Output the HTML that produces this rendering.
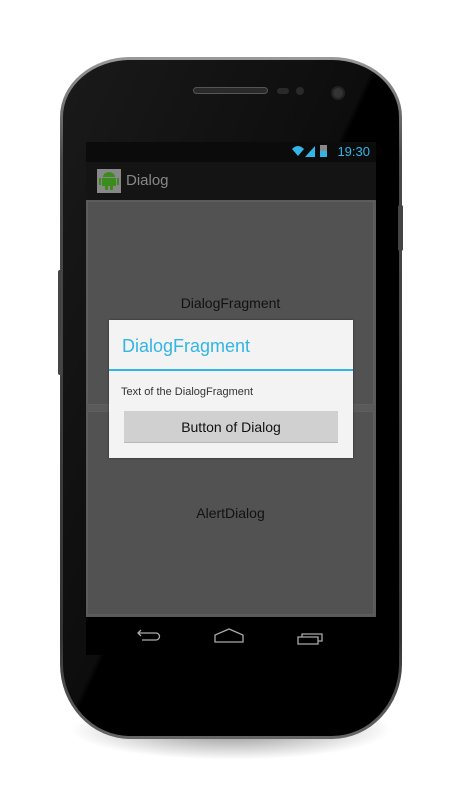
<!DOCTYPE html>
<html><head><meta charset="utf-8"><style>
*{margin:0;padding:0;box-sizing:border-box}
body{width:460px;height:800px;background:#fff;position:relative;overflow:hidden;font-family:"Liberation Sans",sans-serif}
.shadow{position:absolute;left:70px;top:700px;width:322px;height:60px;border-radius:50%;background:radial-gradient(ellipse,rgba(0,0,0,.45),rgba(0,0,0,0) 70%)}
.rim{position:absolute;left:60px;top:57px;width:342px;height:682px;border-radius:70px 70px 70px 70px/60px 60px 75px 75px;background:linear-gradient(#9a9a9a,#4a4a4a 15%,#333 85%,#666)}
.body{position:absolute;left:63px;top:60px;width:336px;height:676px;border-radius:67px 67px 67px 67px/57px 57px 72px 72px;background:#000;overflow:hidden}
.gloss{position:absolute;left:0;top:0;width:336px;height:676px;background:linear-gradient(115deg,rgba(255,255,255,.10),rgba(255,255,255,.05) 48%,rgba(0,0,0,0) 49%)}
.sb{position:absolute;background:#444;border-radius:2px}
.screen{position:absolute;left:86px;top:142px;width:290px;height:513px;background:#000;overflow:hidden}
.status{height:20px;background:#0b0b0b;color:#33b5e5;font-size:13px;text-align:right;padding-right:6px;line-height:20px}
.abar{height:38px;background:#141414;position:relative}
.content{position:absolute;left:0;top:58px;width:290px;height:417px;background:#5a5a5a}
.btn{position:absolute;left:1px;width:287px;background:#525252;color:#111;font-size:14px;text-align:center;border:1px solid #5e5e5e}
.nav{position:absolute;left:0;top:475px;width:290px;height:38px;background:#000}
.dlg{position:absolute;left:109px;top:320px;width:244px;height:138px;background:#f3f3f3;box-shadow:0 0 2px rgba(0,0,0,.5)}
</style></head><body>
<div class="shadow"></div>
<div class="rim"></div>
<div class="body"><div class="gloss"></div></div>
<div class="sb" style="left:398px;top:205px;width:5px;height:46px"></div>
<div class="sb" style="left:58px;top:270px;width:5px;height:105px"></div>
<div style="position:absolute;left:193px;top:87px;width:75px;height:7px;border-radius:4px;background:#2a2a2a;border:1px solid #555"></div>
<div style="position:absolute;left:277px;top:88px;width:12px;height:6px;border-radius:3px;background:#2a2a2a"></div>
<div style="position:absolute;left:296px;top:87px;width:8px;height:8px;border-radius:50%;background:#2a2a2a"></div>
<div style="position:absolute;left:331px;top:86px;width:14px;height:14px;border-radius:50%;background:#333;border:2px solid #222"></div>
<div class="screen">
 <div class="status"><svg width="42" height="14" viewBox="0 0 42 14" style="vertical-align:-2px;margin-right:4px"><path d="M1 5 Q7 -1 13 5 L7 12 Z" fill="#33b5e5"/><path d="M14 13 L24 2 L24 13Z" fill="#33b5e5"/><rect x="29" y="1" width="7" height="12" fill="#33b5e5"/><rect x="29" y="1" width="7" height="6" fill="#888"/></svg>19:30</div>
 <div class="abar"><div style="position:absolute;left:11px;top:7px;width:24px;height:24px;background:#888"><svg width="24" height="24" viewBox="0 0 24 24"><path d="M6 8 A6 5 0 0 1 18 8Z M5 9h14v8h-14z M2 9h2v7h-2z M20 9h2v7h-2z M8 17h3v4h-3z M13 17h3v4h-3z" fill="#3c8b1e"/></svg></div><span style="position:absolute;left:40px;top:10px;color:#888;font-size:15px">Dialog</span></div>
 <div class="content">
  <div class="btn" style="top:1px;height:204px;line-height:202px">DialogFragment</div>
  <div class="btn" style="top:211px;height:204px;line-height:202px">AlertDialog</div>
 </div>
 <div class="nav"><svg width="290" height="38" viewBox="0 0 290 38"><g fill="none" stroke="#aaa" stroke-width="1.3"><path d="M55 13 l-3 3 3 3 M52 16 h18 a3.5 3.5 0 0 1 0 7 h-14"/><path d="M129 25 v-7 l14 -6 14 6 v7 z"/><path d="M212 20 h20 v7 h-20 z M216 20 v-3 h20 v7 h-4"/></g></svg></div>
</div>
<div class="dlg">
 <div style="height:51px;border-bottom:2px solid #33b5e5;color:#33b5e5;font-size:18px;padding:16px 0 0 13px">DialogFragment</div>
 <div style="font-size:11px;color:#333;padding:15px 0 0 12px">Text of the DialogFragment</div>
 <div style="position:absolute;left:15px;top:91px;width:214px;height:32px;background:#d0d0d0;border-bottom:1px solid #b8b8b8;text-align:center;line-height:32px;font-size:14px;color:#111">Button of Dialog</div>
</div>
</body></html>
